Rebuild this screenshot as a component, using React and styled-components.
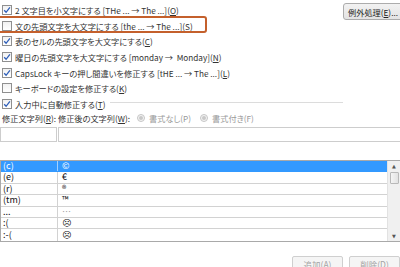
import React from 'react';
import styled, { createGlobalStyle } from 'styled-components';

const Global = createGlobalStyle`
  html, body { margin: 0; padding: 0; background: #fff; }
  body {
    width: 400px; height: 267px; overflow: hidden;
    font-family: "Noto Sans CJK JP", "Noto Sans", "DejaVu Sans", sans-serif;
    font-feature-settings: "palt";
  }
`;

const Page = styled.div`
  width: 400px;
  height: 267px;
  overflow: hidden;
  background: #fff;
  color: #333;
  font-size: 8.2px;
  display: flex;
  flex-direction: column;
`;

const Top = styled.div`
  display: flex;
  align-items: flex-start;
  padding-top: 2px;
`;

const Options = styled.div`
  flex: 1;
  display: flex;
  flex-direction: column;
  min-width: 0;
`;

const OptionRow = styled.div`
  position: relative;
  height: 15.7px;
  display: flex;
  align-items: center;
  gap: 3px;
  padding-left: 2px;
  white-space: nowrap;
`;

const Highlight = styled.div`
  position: absolute;
  left: -6px;
  top: -2px;
  width: 213px;
  height: 17px;
  box-sizing: border-box;
  border: 2px solid #c4602c;
  border-radius: 3px;
  pointer-events: none;
`;

const Box = styled.span`
  width: 10px;
  height: 10px;
  box-sizing: border-box;
  border: 1px solid #8f8f8f;
  background: linear-gradient(#f1f1f1, #ffffff);
  display: flex;
  align-items: center;
  justify-content: center;
  flex-shrink: 0;
`;

const Key = styled.span`
  text-decoration: underline;
  text-underline-offset: 1px;
`;

const Rule = styled.div`
  flex: 1;
  height: 1px;
  background: #dcdcdc;
  margin: 0 0 3px 2px;
`;

const ExceptionButton = styled.div`
  flex-shrink: 0;
  width: 72px;
  height: 17px;
  margin: 1px -15px 0 0;
  box-sizing: border-box;
  border: 1px solid #acacac;
  border-radius: 3px;
  background: linear-gradient(#f2f2f2, #e3e3e3);
  color: #222;
  display: flex;
  align-items: center;
  padding-left: 4px;
  white-space: nowrap;
  overflow: hidden;
`;

const FieldLabels = styled.div`
  height: 13px;
  display: flex;
  align-items: center;
  padding-left: 2px;
  white-space: nowrap;
`;

const FieldLabel = styled.span`
  margin-right: ${p => p.$mr}px;
`;

const RadioItem = styled.span`
  display: flex;
  align-items: center;
  gap: 4px;
  color: #9a9a9a;
  margin-right: ${p => p.$mr}px;
`;

const RadioDot = styled.span`
  width: 8px;
  height: 8px;
  box-sizing: border-box;
  border-radius: 50%;
  border: 1px solid #c6c6c6;
  background: #f4f4f4;
  display: flex;
  align-items: center;
  justify-content: center;
  &::after {
    content: "";
    width: 4px;
    height: 4px;
    border-radius: 50%;
    background: #c8c8c8;
  }
`;

const Inputs = styled.div`
  display: flex;
  gap: 1px;
  margin-top: 3px;
  margin-right: -3px;
`;

const Input = styled.div`
  height: 15px;
  box-sizing: border-box;
  border: 1px solid #cdcdcd;
  background: #fff;
  ${p => (p.$w ? `width: ${p.$w}px; flex-shrink: 0;` : 'flex: 1;')}
`;

const List = styled.div`
  margin-top: 18px;
  height: 82px;
  box-sizing: border-box;
  border: 1px solid #a9a9a9;
  border-right: none;
  display: flex;
  font-size: 9px;
`;

const Rows = styled.div`
  flex: 1;
  display: flex;
  flex-direction: column;
`;

const Row = styled.div`
  height: 11.43px;
  box-sizing: border-box;
  display: grid;
  grid-template-columns: 57px 1fr;
  border-bottom: 1px solid ${p => (p.$sel ? '#3399ff' : '#d2d2d2')};
  background: ${p => (p.$sel ? '#3399ff' : '#fff')};
  color: ${p => (p.$sel ? '#fff' : '#111')};
  &:last-child { border-bottom: none; }
`;

const Cell = styled.div`
  padding-left: ${p => (p.$right ? 4 : 2)}px;
  white-space: nowrap;
  display: flex;
  align-items: center;
  line-height: 10px;
  ${p => (!p.$right ? `border-right: 1px solid ${p.$sel ? 'rgba(255,255,255,0.55)' : '#d2d2d2'};` : '')}
  ${p => (p.$dim ? 'color: #9a9a9a;' : '')}
`;

const Scrollbar = styled.div`
  width: 12px;
  flex-shrink: 0;
  background: #f0f0f0;
  border-left: 1px solid #e2e2e2;
  display: flex;
  flex-direction: column;
  align-items: center;
`;

const Arrow = styled.div`
  height: 10px;
  width: 100%;
  display: flex;
  align-items: center;
  justify-content: center;
  color: #555;
  font-size: 5px;
  font-family: "DejaVu Sans", sans-serif;
`;

const Thumb = styled.div`
  width: 9px;
  height: 12px;
  box-sizing: border-box;
  border: 1px solid #b8b8b8;
  border-radius: 1px;
  background: linear-gradient(90deg, #f4f4f4, #e2e2e2);
  margin-top: 1px;
`;

const Spacer = styled.div`
  flex: 1;
`;

const Buttons = styled.div`
  display: flex;
  justify-content: flex-end;
  gap: 6px;
  margin-top: 14px;
`;

const Button = styled.div`
  width: 51px;
  height: 17px;
  box-sizing: border-box;
  border: 1px solid #cfcfcf;
  border-radius: 2px;
  background: #f5f5f5;
  color: #a3a3a3;
  font-size: 8.5px;
  display: flex;
  align-items: center;
  justify-content: center;
  white-space: nowrap;
`;

const Check = () => (
  <svg width="8" height="8" viewBox="0 0 8 8">
    <path d="M1.2 4.2 L3.1 6.3 L6.9 1.4" fill="none" stroke="#2f5fb8" strokeWidth="1.3" />
  </svg>
);

const CheckBox = ({ checked }) => <Box>{checked && <Check />}</Box>;

const entries = [
  ['(c)', '©'],
  ['(e)', '€'],
  ['(r)', '®'],
  ['(tm)', '™'],
  ['...', '…', true],
  [':(', '☹'],
  [':-(', '☹'],
];

export default function App() {
  return (
    <>
      <Global />
      <Page>
        <Top>
          <Options>
            <OptionRow>
              <CheckBox checked />
              <span>2 文字目を小文字にする [THe ... → The ...](<Key>O</Key>)</span>
            </OptionRow>
            <OptionRow>
              <Highlight />
              <CheckBox />
              <span>文の先頭文字を大文字にする [the ... → The ...](<Key>S</Key>)</span>
            </OptionRow>
            <OptionRow>
              <CheckBox checked />
              <span>表のセルの先頭文字を大文字にする(<Key>C</Key>)</span>
            </OptionRow>
            <OptionRow>
              <CheckBox checked />
              <span>曜日の先頭文字を大文字にする [monday → &nbsp;Monday](<Key>N</Key>)</span>
            </OptionRow>
            <OptionRow>
              <CheckBox checked />
              <span>CapsLock キーの押し間違いを修正する [tHE ... → The ...](<Key>L</Key>)</span>
            </OptionRow>
            <OptionRow>
              <CheckBox />
              <span>キーボードの設定を修正する(<Key>K</Key>)</span>
            </OptionRow>
            <OptionRow>
              <CheckBox checked />
              <span>入力中に自動修正する(<Key>T</Key>)</span>
              <Rule />
            </OptionRow>
          </Options>
          <ExceptionButton>例外処理(<Key>E</Key>)...</ExceptionButton>
        </Top>
        <FieldLabels>
          <FieldLabel $mr={2}>修正文字列(<Key>R</Key>):</FieldLabel>
          <FieldLabel $mr={7}>修正後の文字列(<Key>W</Key>):</FieldLabel>
          <RadioItem $mr={9}><RadioDot />書式なし(P)</RadioItem>
          <RadioItem $mr={0}><RadioDot />書式付き(F)</RadioItem>
        </FieldLabels>
        <Inputs>
          <Input $w={57} />
          <Input />
        </Inputs>
        <List>
          <Rows>
            {entries.map(([from, to, dim], i) => (
              <Row key={i} $sel={i === 0}>
                <Cell $sel={i === 0}>{from}</Cell>
                <Cell $right $dim={dim}>{to}</Cell>
              </Row>
            ))}
          </Rows>
          <Scrollbar>
            <Arrow>▲</Arrow>
            <Thumb />
            <Spacer />
            <Arrow>▼</Arrow>
          </Scrollbar>
        </List>
        <Buttons>
          <Button>追加(A)</Button>
          <Button>削除(D)</Button>
        </Buttons>
      </Page>
    </>
  );
}
